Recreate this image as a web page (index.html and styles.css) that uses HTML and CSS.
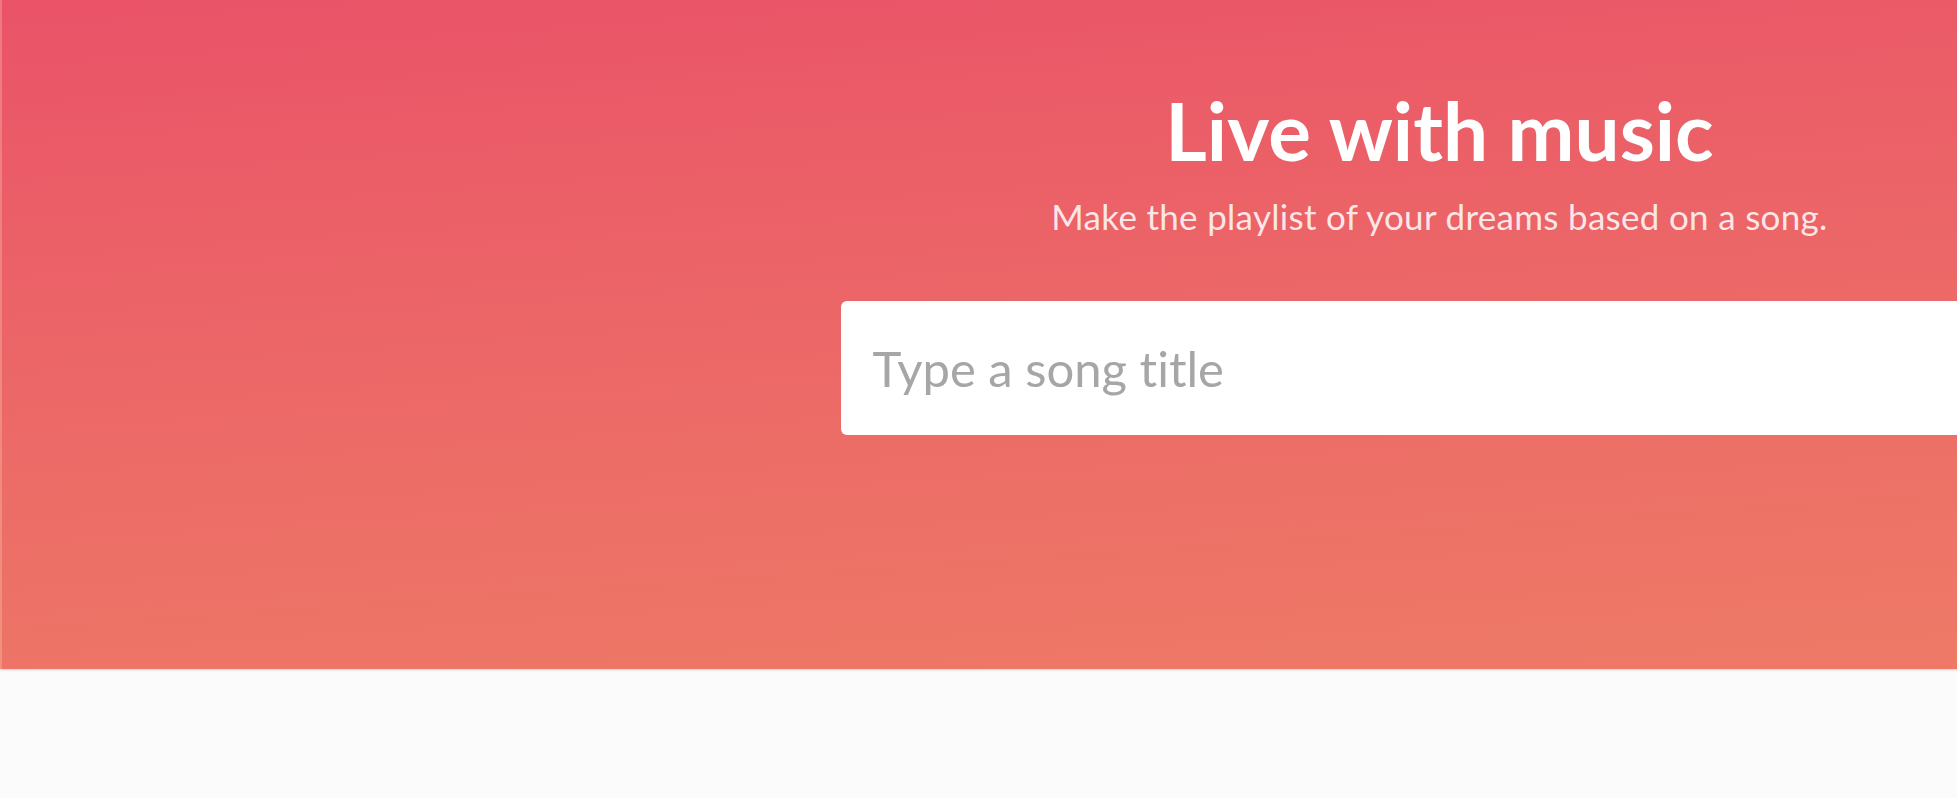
FILE: index.html
```html
<!DOCTYPE html>
<html lang="en">
<head>
  <meta charset="UTF-8" />
  <meta name="viewport" content="width=device-width, initial-scale=1.0"/>
  <title>Live with music</title>
  <link rel="stylesheet" href="styles.css">
</head>
<body>

  <header class="hero">
    <div class="hero-art"></div>

    <div class="hero-content">
      <h1>Live with music</h1>
      <p class="subtitle">Make the playlist of your dreams based on a song.</p>

      <form class="search">
        <input type="text" name="song" placeholder="Type a song title" autocomplete="off">
      </form>
    </div>
  </header>

  <main class="results"></main>

</body>
</html>
```

FILE: styles.css
```css
* {
  box-sizing: border-box;
}
body {
  font-family: 'Lato', 'Liberation Sans', sans-serif;
  font-variant-ligatures: none;
  margin: 0;
  padding: 0;
  background-color: #fbfbfb;
  color: #111;
  overflow-x: hidden;
}

.hero {
  display: grid;
  grid-template-columns: 920px minmax(0, 1fr);
  height: 669px;
  background: linear-gradient(176deg, #ea5368 0%, #ec6a67 55%, #ee7a66 100%);
  border-left: 2px solid rgba(255, 255, 255, 0.18);
  box-shadow: 0 1px 2px rgba(0, 0, 0, 0.18);
  overflow: hidden;
}

.hero-content {
  display: flex;
  flex-direction: column;
  align-items: center;
  padding-top: 82px;
  color: #fff;
}

h1 {
  font-size: 80px;
  font-weight: 700;
  line-height: 96px;
  margin: 0;
  white-space: nowrap;
}

p.subtitle {
  font-size: 35px;
  line-height: 42px;
  margin: 17px 0 0;
  color: rgba(255, 255, 255, 0.85);
  letter-spacing: 0.3px;
  white-space: nowrap;
}

.search {
  margin-top: 64px;
  display: flex;
  justify-content: center;
}

.search input {
  width: 1198px;
  flex: none;
  height: 134px;
  padding: 0 32px;
  font-family: inherit;
  font-variant-ligatures: none;
  font-size: 49px;
  color: #333;
  background: #fff;
  border: none;
  border-radius: 6px;
  outline: none;
}

.search input::placeholder {
  color: #a6a6a6;
}

.results {
  min-height: 129px;
}
```
